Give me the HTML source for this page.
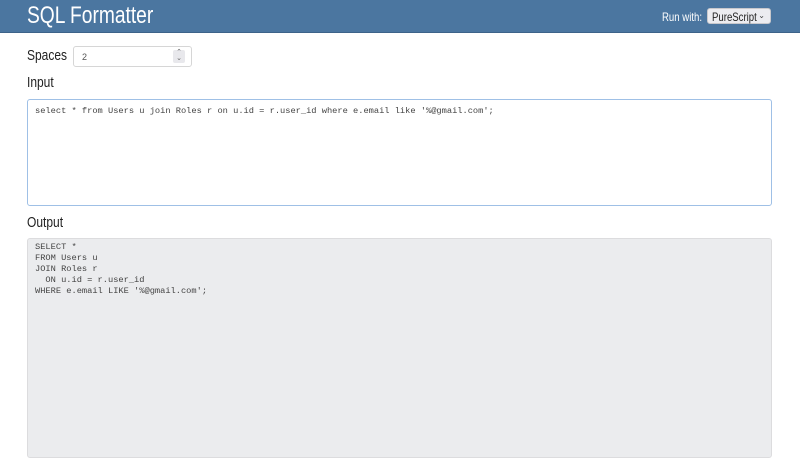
<!DOCTYPE html>
<html><head><style>
body{margin:0;width:800px;height:452px;overflow:hidden;background:#fff;font-family:"Liberation Sans",sans-serif;color:#222;position:relative}
.hdr{position:absolute;left:0;top:0;width:800px;height:32px;background:#4b76a0;border-bottom:1px solid #3d6389}
.c{position:absolute;transform-origin:0 0;transform:scaleX(0.8);white-space:nowrap}
.title{left:27px;top:2px;color:#fff;font-size:24px}
.run{left:662px;top:10px;color:#fff;font-size:12px}
.sel{position:absolute;left:707px;top:8px;width:64px;height:16px;background:#ececf0;border:1px solid #c8c8cc;border-radius:3px;box-sizing:border-box}
.sel b{font-weight:normal;left:4px;top:1px;font-size:12px;color:#222}
.sel span{position:absolute;right:5px;top:2px;font-size:8px;color:#444}
.lbl{left:27px;font-size:15px;color:#222}
.spin{position:absolute;left:73px;top:46px;width:119px;height:21px;border:1px solid #d6d6d6;border-radius:3px;box-sizing:border-box;font-size:9px;color:#555;padding:5px 0 0 8px}
.spin i{position:absolute;right:6px;top:3px;width:12px;height:13px;background:#e8e8ec;border-radius:2px;font-style:normal;font-size:7px;text-align:center;line-height:6px;color:#666}
.box{position:absolute;left:27px;width:745px;box-sizing:border-box;font-family:"Liberation Mono",monospace;font-size:8.7px;line-height:10.9px;white-space:pre;color:#444;padding:6px 7px}
.in{top:99px;height:107px;border:1px solid #9fc0e6;border-radius:3px}
.out{top:238px;height:220px;background:#ebecee;border:1px solid #dcdcde;border-radius:3px;padding-top:3px}
</style></head><body>
<div class="hdr"><div class="c title">SQL Formatter</div><div class="c run">Run with:</div><div class="sel"><b class="c">PureScript</b><span>⌄</span></div></div>
<div class="c lbl" style="top:47px">Spaces</div>
<div class="spin">2<i>⌃<br>⌄</i></div>
<div class="c lbl" style="top:74px">Input</div>
<div class="box in">select * from Users u join Roles r on u.id = r.user_id where e.email like '%@gmail.com';</div>
<div class="c lbl" style="top:214px">Output</div>
<div class="box out">SELECT *
FROM Users u
JOIN Roles r
  ON u.id = r.user_id
WHERE e.email LIKE '%@gmail.com';</div>
</body></html>
